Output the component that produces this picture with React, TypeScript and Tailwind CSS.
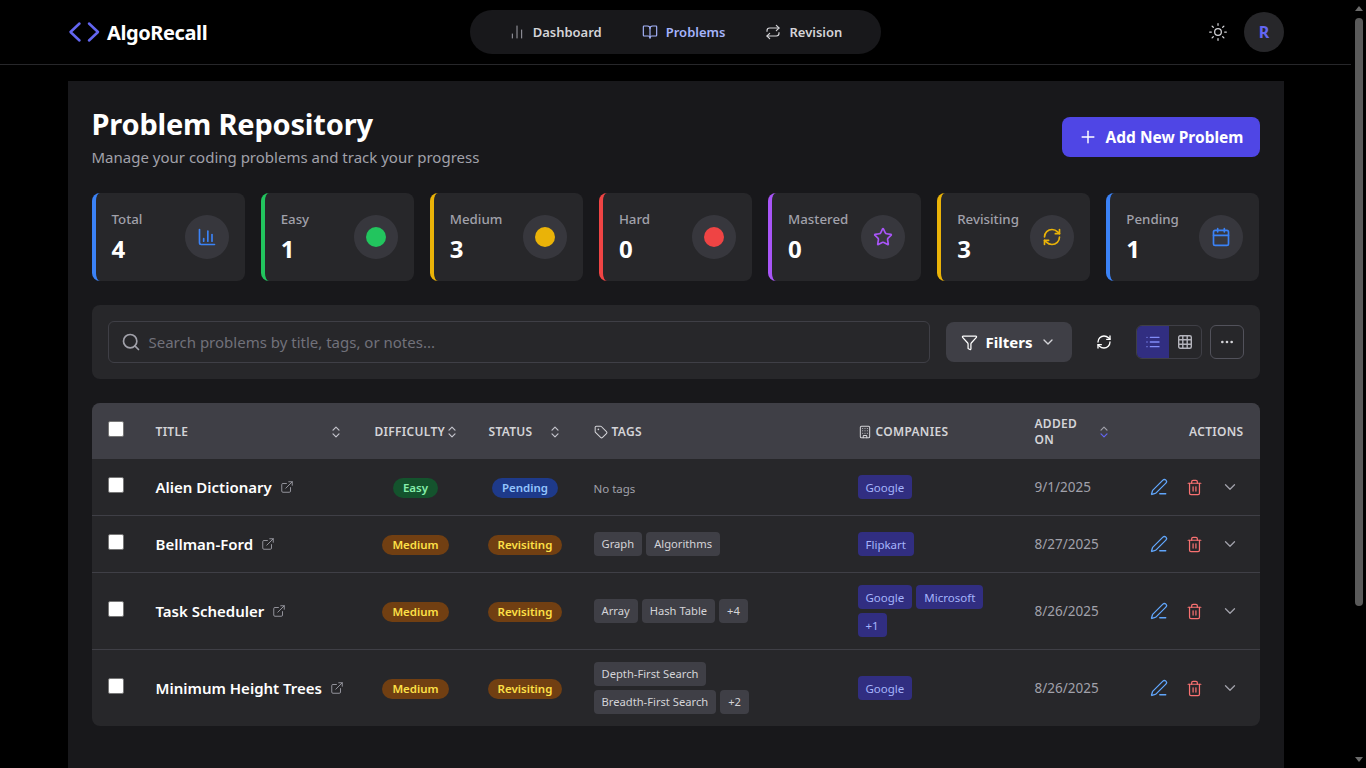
import React from "react";
import { BookOpen, Calendar, ChartColumn, ChartNoAxesColumn, ChevronDown, Ellipsis, ExternalLink, Funnel, List, PenLine, Plus, RefreshCw, Repeat, Search, Star, Sun, Tag, Trash2, Building } from "lucide-react";

const font = { fontFamily: '"Noto Sans", "Open Sans", sans-serif' };

function Sort({ active }: { active?: boolean }) {
  return (
    <svg width="14" height="14" viewBox="0 0 14 14" fill="none" strokeWidth="1.2" strokeLinecap="round" strokeLinejoin="round" className="shrink-0">
      <path d="M4 5.2 7 2.2l3 3" stroke={active ? "#a1a1aa" : "#c4c4cc"} />
      <path d="M4 8.8l3 3 3-3" stroke={active ? "#6366f1" : "#c4c4cc"} />
    </svg>
  );
}

const stats = [
  { l: "Total", v: "4", b: "border-l-[#3b82f6]", i: <ChartColumn size={20} className="text-[#3b82f6]" /> },
  { l: "Easy", v: "1", b: "border-l-[#22c55e]", i: <div className="w-5 h-5 rounded-full bg-[#22c55e]" /> },
  { l: "Medium", v: "3", b: "border-l-[#eab308]", i: <div className="w-5 h-5 rounded-full bg-[#eab308]" /> },
  { l: "Hard", v: "0", b: "border-l-[#ef4444]", i: <div className="w-5 h-5 rounded-full bg-[#ef4444]" /> },
  { l: "Mastered", v: "0", b: "border-l-[#a855f7]", i: <Star size={20} className="text-[#a855f7]" /> },
  { l: "Revisiting", v: "3", b: "border-l-[#eab308]", i: <RefreshCw size={20} className="text-[#eab308]" /> },
  { l: "Pending", v: "1", b: "border-l-[#3b82f6]", i: <Calendar size={20} className="text-[#3b82f6]" /> },
];

const cols = "grid grid-cols-[48px_219px_114px_105px_264px_177px_115px_126px]";

const Tagc = ({ t }: { t: string }) => <span className="h-6 pt-px px-2 rounded bg-[#3f3f46] text-[#d4d4d8] text-[11.2px] flex items-center whitespace-nowrap">{t}</span>;
const Comp = ({ t }: { t: string }) => <span className="h-6 pt-px px-2 rounded bg-[#312e81] text-[#a5b4fc] text-[11.5px] flex items-center whitespace-nowrap">{t}</span>;

const Diff = ({ t }: { t: string }) => (
  <span className={`h-5 mt-[2px] px-[10px] rounded-full text-[11.5px] flex items-center font-semibold ${t === "Easy" ? "bg-[#14532d] text-[#86efac]" : "bg-[#713f12] text-[#fde047]"}`}>{t}</span>
);
const Stat = ({ t }: { t: string }) => (
  <span className={`h-5 mt-[2px] px-[10px] rounded-full text-[11.5px] flex items-center font-semibold ${t === "Pending" ? "bg-[#1e3a8a] text-[#93c5fd]" : "bg-[#713f12] text-[#fde047]"}`}>{t}</span>
);

const rows = [
  { title: "Alien Dictionary", d: "Easy", s: "Pending", tags: [] as string[][], comps: [["Google"]], date: "9/1/2025", h: "h-[57px]" },
  { title: "Bellman-Ford", d: "Medium", s: "Revisiting", tags: [["Graph", "Algorithms"]], comps: [["Flipkart"]], date: "8/27/2025", h: "h-[57px]" },
  { title: "Task Scheduler", d: "Medium", s: "Revisiting", tags: [["Array", "Hash Table", "+4"]], comps: [["Google", "Microsoft"], ["+1"]], date: "8/26/2025", h: "h-[77px]" },
  { title: "Minimum Height Trees", d: "Medium", s: "Revisiting", tags: [["Depth-First Search"], ["Breadth-First Search", "+2"]], comps: [["Google"]], date: "8/26/2025", h: "h-[76px]" },
];

export default function App() {
  return (
    <div style={font} className="h-screen w-full overflow-hidden bg-black flex text-white">
      <div className="flex-1 min-w-0 flex flex-col">
        <header className="h-[65px] shrink-0 border-b border-[#27272a] pl-[68px]">
          <div className="w-[1216px] h-full flex items-center">
            <div className="w-[402px] flex items-center gap-[7px]">
              <svg width="32" height="24" viewBox="0 0 32 24" fill="none" stroke="#6366f1" strokeWidth="2.5" strokeLinecap="round" strokeLinejoin="round" className="shrink-0">
                <path d="M11.5 3.5 2.5 12l9 8.5" />
                <path d="M21 3.5 30 12l-9 8.5" />
              </svg>
              <span className="text-xl font-bold tracking-[-0.4px] pt-[2px]">AlgoRecall</span>
            </div>
            <nav className="h-11 w-[411px] rounded-full bg-[#18181b] flex items-center justify-center gap-[40px]">
              <a className="flex items-center gap-2 text-[13px] font-semibold text-[#d4d4d8]"><ChartNoAxesColumn size={16} strokeWidth={1.5} className="text-[#a1a1aa]" /><span className="pt-[2px]">Dashboard</span></a>
              <a className="flex items-center gap-2 text-[13px] font-semibold text-[#a5b4fc]"><BookOpen size={16} strokeWidth={1.75} /><span className="pt-[2px]">Problems</span></a>
              <a className="flex items-center gap-2 text-[13px] font-semibold text-[#d4d4d8]"><Repeat size={16} strokeWidth={1.75} /><span className="pt-[2px]">Revision</span></a>
            </nav>
            <div className="ml-auto flex items-center gap-[16px]">
              <Sun size={20} strokeWidth={1.5} className="text-[#d4d4d8]" />
              <div className="w-10 h-10 rounded-full bg-[#27272a] flex items-center justify-center text-[#6366f1] text-base font-bold">R</div>
            </div>
          </div>
        </header>
        <div className="flex-1 min-h-0 pt-4 pl-[67.5px]">
          <main className="w-[1216px] h-full bg-[#18181b] p-6">
            <div className="flex items-start justify-between h-[64px]">
              <div className="pt-px">
                <h1 className="text-[29px] leading-[36px] font-bold tracking-[-0.2px]">Problem Repository</h1>
                <p className="text-[15px] leading-[24px] text-[#a1a1aa] mt-[3px]">Manage your coding problems and track your progress</p>
              </div>
              <button className="h-10 w-[198px] pt-[2px] rounded-lg bg-[#4f46e5] flex items-center justify-center gap-[8px] text-[15.5px] font-bold mt-[12px]"><Plus size={20} strokeWidth={1.75} className="-mt-[2px]" />Add New Problem</button>
            </div>
            <div className="grid grid-cols-7 gap-4 mt-6">
              {stats.map((s) => (
                <div key={s.l} className={`h-[88px] rounded-lg bg-[#27272a] border-l-4 ${s.b} pl-4 pr-4 flex items-center justify-between`}>
                  <div>
                    <div className="text-[13.3px] leading-5 font-medium text-[#a1a1aa]">{s.l}</div>
                    <div className="text-[24px] leading-8 font-bold mt-1">{s.v}</div>
                  </div>
                  <div className="w-11 h-11 rounded-full bg-[#3f3f46]/70 flex items-center justify-center shrink-0">{s.i}</div>
                </div>
              ))}
            </div>
            <div className="h-[74px] rounded-lg bg-[#27272a] mt-6 px-4 flex items-center">
              <div className="h-[42px] w-[822px] rounded-md border border-[#3f3f46] flex items-center pl-3 gap-2">
                <Search size={20} strokeWidth={2} className="text-[#a1a1aa]" />
                <span className="text-[15px] text-[#71717a]">Search problems by title, tags, or notes...</span>
              </div>
              <button className="ml-4 h-10 w-[126px] rounded-lg bg-[#3f3f46] flex items-center justify-center gap-2 text-[15px] font-bold"><Funnel size={17} strokeWidth={1.75} />Filters<ChevronDown size={16} strokeWidth={2} className="text-[#d4d4d8]" /></button>
              <div className="w-8 h-8 ml-4 flex items-center justify-center"><RefreshCw size={16} strokeWidth={2} /></div>
              <div className="ml-4 h-[34px] w-[66px] rounded-md border border-[#3f3f46] flex overflow-hidden">
                <div className="w-8 bg-[#312e81] flex items-center justify-center"><List size={16} strokeWidth={2} className="text-[#818cf8]" /></div>
                <div className="flex-1 flex items-center justify-center">
                  <svg width="14" height="14" viewBox="0 0 14 14" fill="none" stroke="#b4b4bc" strokeWidth="1.4">
                    <rect x="0.7" y="0.7" width="12.6" height="12.6" rx="1.5" />
                    <path d="M4.8 1v12M9.2 1v12M1 4.8h12M1 9.2h12" />
                  </svg>
                </div>
              </div>
              <div className="ml-2 w-[34px] h-[34px] rounded-md border border-[#52525b] flex items-center justify-center"><Ellipsis size={16} strokeWidth={2} className="text-[#d4d4d8]" /></div>
            </div>
            <div className="mt-6 rounded-lg overflow-hidden bg-[#27272a]">
              <div className={`${cols} h-14 bg-[#3f3f46] items-center text-xs font-semibold text-[#d4d4d8] tracking-[0.3px]`}>
                <div className="pl-4 mb-[4px]"><div className="w-4 h-4 rounded-[2px] bg-white border border-[#767676]" /></div>
                <div className="px-4 pt-[2px] flex items-center justify-between">TITLE<Sort /></div>
                <div className="pl-4 pt-[2px] flex items-center">DIFFICULTY<Sort /></div>
                <div className="pl-4 pr-4 pt-[2px] flex items-center justify-between">STATUS<Sort /></div>
                <div className="pl-4 pt-[2px] flex items-center gap-1"><Tag size={14} strokeWidth={1.75} />TAGS</div>
                <div className="pl-4 pt-[2px] flex items-center gap-1"><Building size={14} strokeWidth={1.75} />COMPANIES</div>
                <div className="pl-4 pr-[23px] pt-[2px] flex items-center justify-between leading-4"><span>ADDED<br />ON</span><Sort active /></div>
                <div className="pr-4 pt-[2px] text-right">ACTIONS</div>
              </div>
              {rows.map((r, i) => (
                <div key={r.title} className={`${cols} ${r.h} items-center ${i < 3 ? "border-b border-[#3f3f46]" : ""}`}>
                  <div className="pl-4 mb-[4px]"><div className="w-4 h-4 rounded-[2px] bg-white border border-[#767676]" /></div>
                  <div className="pl-4 flex items-center gap-2">
                    <span className="text-[15px] font-semibold whitespace-nowrap">{r.title}</span>
                    <ExternalLink size={14} strokeWidth={1.5} className="text-[#a1a1aa] shrink-0" />
                  </div>
                  <div className="flex justify-center"><Diff t={r.d} /></div>
                  <div className="flex justify-center"><Stat t={r.s} /></div>
                  <div className="pl-4 flex flex-col gap-1">
                    {r.tags.length === 0 && <span className="text-[11.5px] text-[#a1a1aa] mt-[3px]">No tags</span>}
                    {r.tags.map((line, k) => <div key={k} className="flex gap-1">{line.map((t) => <Tagc key={t} t={t} />)}</div>)}
                  </div>
                  <div className="pl-4 flex flex-col gap-1">
                    {r.comps.map((line, k) => <div key={k} className="flex gap-1">{line.map((t) => <Comp key={t} t={t} />)}</div>)}
                  </div>
                  <div className="pl-4 pt-px text-[13.5px] text-[#a1a1aa]">{r.date}</div>
                  <div className="pl-[16px] flex items-center">
                    <PenLine size={18} strokeWidth={1.75} className="text-[#60a5fa]" />
                    <Trash2 size={17} strokeWidth={1.75} className="text-[#f87171] ml-[18px]" />
                    <ChevronDown size={18} strokeWidth={1.75} className="text-[#a1a1aa] ml-[18px]" />
                  </div>
                </div>
              ))}
            </div>
          </main>
        </div>
      </div>
      <div className="w-[15px] shrink-0 bg-black flex flex-col items-center">
        <div className="h-[17px] flex items-center justify-center"><div className="w-0 h-0 border-x-[4px] border-x-transparent border-b-[5px] border-b-[#6b6b6b]" /></div>
        <div className="w-[8px] mt-px h-[588px] rounded-full bg-[#5a5a5a]" />
        <div className="flex-1" />
        <div className="h-[17px] flex items-center justify-center"><div className="w-0 h-0 border-x-[4px] border-x-transparent border-t-[5px] border-t-[#6b6b6b]" /></div>
      </div>
    </div>
  );
}
